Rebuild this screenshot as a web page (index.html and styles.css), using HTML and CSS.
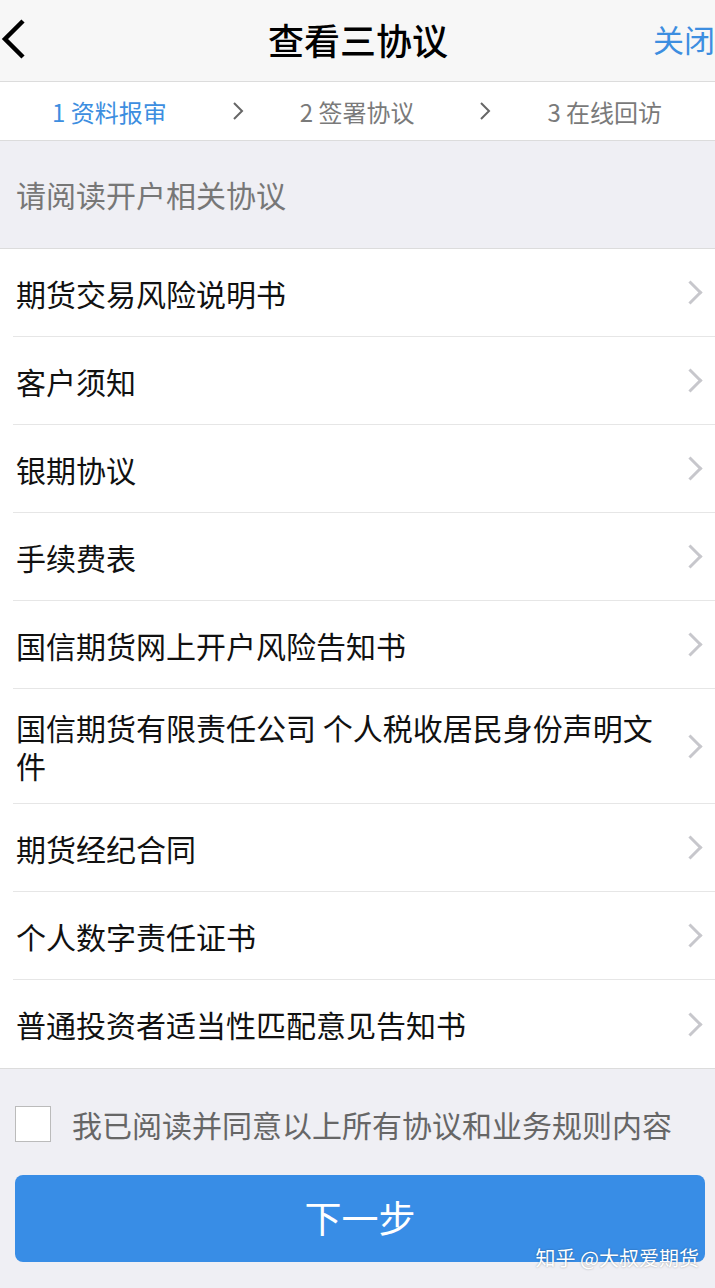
FILE: index.html
```html
<!DOCTYPE html>
<html lang="zh-CN">
<head>
    <meta charset="UTF-8">
    <meta name="viewport" content="width=device-width, initial-scale=1.0">
    <title>查看三协议</title>
    <link rel="stylesheet" href="styles.css">
</head>
<body>
    <div class="page">
        <div class="nav-bar">
            <span class="nav-back">
                <svg width="26" height="40" viewBox="0 0 26 40"><polyline points="22,2 4,20 22,38" fill="none" stroke="#000" stroke-width="4.5"/></svg>
            </span>
            <h1 class="nav-title">查看三协议</h1>
            <span class="nav-close">关闭</span>
        </div>

        <div class="steps">
            <span class="step active">1 资料报审</span>
            <span class="step-arrow"><svg width="12" height="20" viewBox="0 0 12 20"><polyline points="2,2 10,10 2,18" fill="none" stroke="#666" stroke-width="2"/></svg></span>
            <span class="step">2 签署协议</span>
            <span class="step-arrow"><svg width="12" height="20" viewBox="0 0 12 20"><polyline points="2,2 10,10 2,18" fill="none" stroke="#666" stroke-width="2"/></svg></span>
            <span class="step">3 在线回访</span>
        </div>

        <div class="section-title">请阅读开户相关协议</div>

        <ul class="doc-list">
            <li class="doc-item"><span class="doc-name">期货交易风险说明书</span><span class="chev"></span></li>
            <li class="doc-item"><span class="doc-name">客户须知</span><span class="chev"></span></li>
            <li class="doc-item"><span class="doc-name">银期协议</span><span class="chev"></span></li>
            <li class="doc-item"><span class="doc-name">手续费表</span><span class="chev"></span></li>
            <li class="doc-item"><span class="doc-name">国信期货网上开户风险告知书</span><span class="chev"></span></li>
            <li class="doc-item tall"><span class="doc-name">国信期货有限责任公司 个人税收居民身份声明文件</span><span class="chev"></span></li>
            <li class="doc-item"><span class="doc-name">期货经纪合同</span><span class="chev"></span></li>
            <li class="doc-item"><span class="doc-name">个人数字责任证书</span><span class="chev"></span></li>
            <li class="doc-item"><span class="doc-name">普通投资者适当性匹配意见告知书</span><span class="chev"></span></li>
        </ul>

        <div class="footer">
            <label class="agree">
                <span class="checkbox"></span>
                <span class="agree-text">我已阅读并同意以上所有协议和业务规则内容</span>
            </label>
            <button class="next-btn">下一步</button>
            <span class="watermark">知乎 @大叔爱期货</span>
        </div>
    </div>
</body>
</html>
```

FILE: styles.css
```css
/* page base */
body {
    margin: 0;
    padding: 0;
    font-family: "Noto Sans CJK SC", "Noto Sans", sans-serif;
    background-color: #efeff4;
}

.page {
    position: relative;
    width: 715px;
    min-height: 1288px;
    overflow: hidden;
}

.nav-bar {
    height: 81px;
    background-color: #f7f7f7;
    border-bottom: 1px solid #dcdcdc;
    display: flex;
    align-items: center;
    justify-content: space-between;
}

.nav-back {
    width: 63px;
    display: flex;
    align-items: center;
    padding-left: 1px;
    margin-top: -4px;
}

.nav-title {
    margin: 0;
    font-size: 36px;
    font-weight: 500;
    color: #000;
    margin-top: -4px;
}

.nav-close {
    width: 63px;
    text-align: right;
    font-size: 31px;
    color: #3d8ee0;
    margin-right: 0;
    margin-top: -4px;
    white-space: nowrap;
}

.steps {
    height: 58px;
    background-color: #fff;
    border-bottom: 1px solid #dcdcdc;
    display: flex;
    align-items: center;
    padding-left: 52px;
}

.step {
    font-size: 24px;
    color: #7a7a7a;
}

.step.active {
    color: #3d8ee0;
}

.step-arrow {
    display: flex;
    align-items: center;
    margin: 0 56px 0 65px;
}

.section-title {
    height: 108px;
    display: flex;
    align-items: center;
    padding-left: 16px;
    font-size: 30px;
    color: #777;
    border-bottom: 1px solid #dcdcdc;
    box-sizing: border-box;
    padding-bottom: 2px;
}

.doc-list {
    list-style: none;
    margin: 0;
    padding: 0 0 0 13px;
    background-color: #fff;
    border-bottom: 1px solid #dcdcdc;
}

.doc-item {
    min-height: 88px;
    display: flex;
    align-items: center;
    justify-content: space-between;
    border-bottom: 1px solid #e6e6e6;
    box-sizing: border-box;
    padding: 0 10px 0 3px;
}

.doc-item:last-child {
    border-bottom: none;
}

.doc-item.tall {
    min-height: 115px;
}

.doc-name {
    font-size: 30px;
    color: #111;
    line-height: 38px;
    max-width: 650px;
}

.chev {
    width: 14px;
    height: 14px;
    border-top: 3px solid #c7c7cc;
    border-right: 3px solid #c7c7cc;
    transform: rotate(45deg);
    margin-right: 6px;
    flex-shrink: 0;
}

.footer {
    padding: 36px 10px 26px 15px;
}

.agree {
    display: flex;
    align-items: center;
    height: 38px;
}

.checkbox {
    width: 34px;
    height: 34px;
    background-color: #fff;
    border: 1px solid #bbb;
    margin-right: 21px;
}

.agree-text {
    font-size: 30px;
    line-height: 38px;
    color: #666;
}

.next-btn {
    display: block;
    width: 690px;
    height: 87px;
    margin-top: 32px;
    border: none;
    border-radius: 8px;
    background-color: #388de6;
    color: #fff;
    font-family: inherit;
    font-size: 37px;
    padding: 0 0 4px 0;
}

.watermark {
    position: absolute;
    right: 16px;
    bottom: 16px;
    font-size: 20px;
    color: #fff;
    text-shadow: 0 0 2px rgba(0, 0, 0, 0.35);
}
```
